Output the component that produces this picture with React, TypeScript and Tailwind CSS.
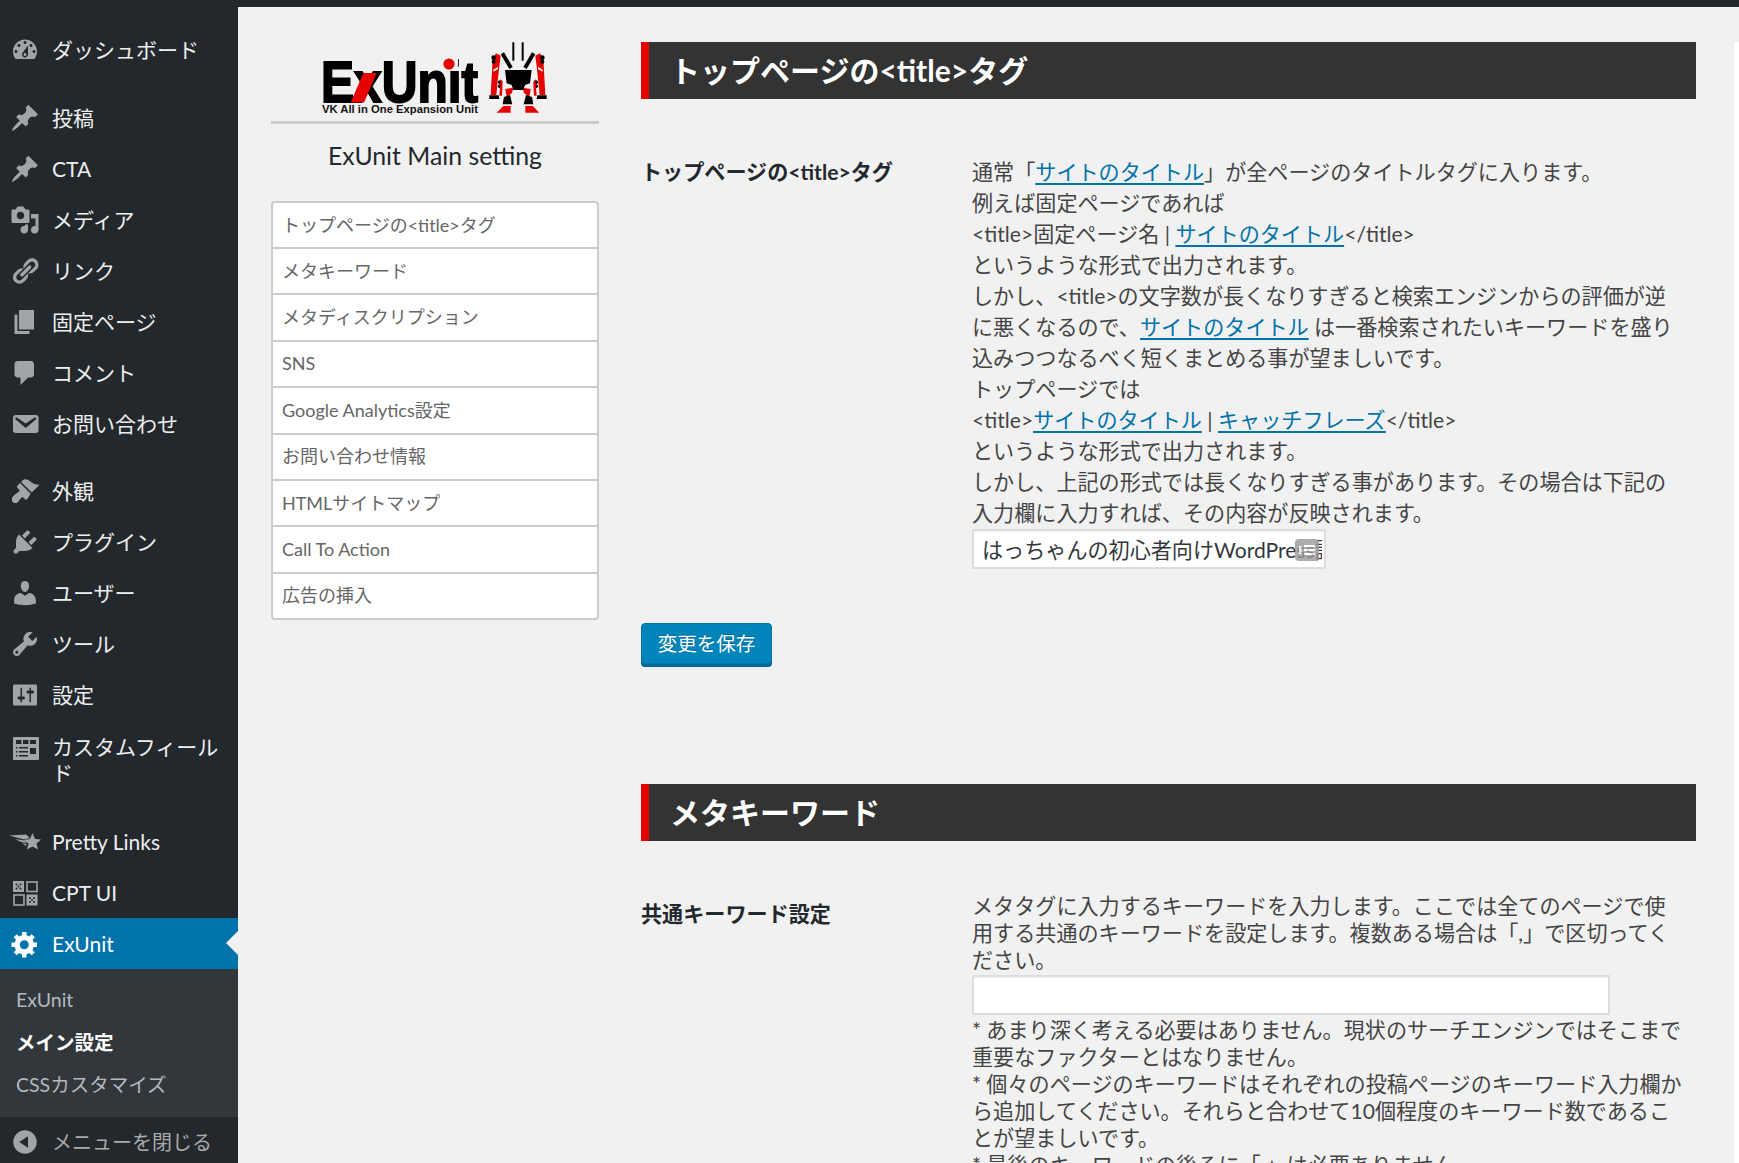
const icons: Record<string, string> = {
  dashboard:
    "M3.76 16h12.48c1.1-1.37 1.76-3.11 1.76-5 0-4.42-3.58-8-8-8s-8 3.58-8 8c0 1.89.66 3.63 1.76 5zM10 4c.55 0 1 .45 1 1s-.45 1-1 1-1-.45-1-1 .45-1 1-1zM6 6c.55 0 1 .45 1 1s-.45 1-1 1-1-.45-1-1 .45-1 1-1zm8 0c.55 0 1 .45 1 1s-.45 1-1 1-1-.45-1-1 .45-1 1-1zm-5.37 5.55L12 7v6c0 1.1-.9 2-2 2s-2-.9-2-2c0-.57.24-1.08.63-1.45zM4 10c.55 0 1 .45 1 1s-.45 1-1 1-1-.45-1-1 .45-1 1-1zm12 0c.55 0 1 .45 1 1s-.45 1-1 1-1-.45-1-1 .45-1 1-1zm-5 3c0-.55-.45-1-1-1s-1 .45-1 1 .45 1 1 1 1-.45 1-1z",
  pin: "M10.44 3.02l1.82-1.82 6.36 6.35-1.83 1.82c-1.05-.68-2.48-.57-3.41.36l-.75.75c-.92.93-1.04 2.35-.35 3.41l-1.83 1.82-2.41-2.41-2.8 2.79c-.42.42-3.38 2.71-3.8 2.29s1.86-3.39 2.28-3.81l2.79-2.79L4.1 9.36l1.83-1.82c1.05.69 2.48.57 3.4-.36l.75-.75c.93-.92 1.05-2.35.36-3.41z",
  media:
    "M13 11V4c0-.55-.45-1-1-1h-1.67L9 1H5L3.67 3H2c-.55 0-1 .45-1 1v7c0 .55.45 1 1 1h10c.55 0 1-.45 1-1zM7 4.5c1.38 0 2.5 1.12 2.5 2.5S8.38 9.5 7 9.5 4.5 8.38 4.5 7 5.62 4.5 7 4.5zM14 6h5v10.5c0 1.38-1.12 2.5-2.5 2.5S14 17.88 14 16.5s1.12-2.5 2.5-2.5c.17 0 .34.02.5.05V9h-3V6zm-4 8.05V13h2v3.5c0 1.38-1.12 2.5-2.5 2.5S7 17.88 7 16.5 8.12 14 9.5 14c.17 0 .34.02.5.05z",
  links:
    "M17.74 2.76c1.68 1.69 1.68 4.41 0 6.1l-1.53 1.52c-1.12 1.12-2.7 1.47-4.14 1.09l2.62-2.61.76-.77.76-.76c.84-.84.84-2.2 0-3.04-.84-.85-2.2-.85-3.04 0l-.77.76-3.38 3.38c-.37-1.44-.02-3.02 1.1-4.14l1.52-1.53c1.69-1.68 4.42-1.68 6.1 0zM8.59 13.43l5.34-5.34c.42-.42.42-1.1 0-1.52-.44-.43-1.13-.39-1.53 0l-5.33 5.34c-.42.42-.42 1.1 0 1.52.44.43 1.13.39 1.52 0zm-.76 2.29l4.14-4.15c.38 1.44.03 3.02-1.09 4.14l-1.52 1.53c-1.69 1.68-4.41 1.68-6.1 0-1.68-1.68-1.68-4.42 0-6.1l1.53-1.52c1.12-1.12 2.7-1.47 4.14-1.1l-4.14 4.15c-.85.84-.85 2.2 0 3.05.84.84 2.2.84 3.04 0z",
  page: "M6 15V2h10v13H6zm-1 1h8v2H3V5h2v11z",
  comment:
    "M5 2h9c1.1 0 2 .9 2 2v7c0 1.1-.9 2-2 2h-2l-5 5v-5H5c-1.1 0-2-.9-2-2V4c0-1.1.9-2 2-2z",
  email:
    "M3.87 4h13.25C18.37 4 19 4.59 19 5.79v8.42c0 1.19-.63 1.79-1.88 1.79H3.87c-1.25 0-1.88-.6-1.88-1.79V5.79c0-1.2.63-1.79 1.88-1.79zm6.62 8.6l6.74-5.53c.24-.2.43-.66.13-1.07-.29-.41-.82-.42-1.17-.17l-5.7 3.86L4.8 5.83c-.35-.25-.88-.24-1.17.17-.3.41-.11.87.13 1.07z",
  appearance:
    "M14.48 11.06L7.41 3.99l1.5-1.5c.5-.56 2.3-.47 3.51.32 1.21.8 1.43 1.28 2.91 2.1 1.18.64 2.45 1.26 4.45.85zm-.71.71L6.7 4.7 4.93 6.47c-.39.39-.39 1.02 0 1.41l1.06 1.06c.39.39.39 1.03 0 1.42-.6.6-1.43 1.11-2.21 1.69-.35.26-.7.53-1.01.84C1.43 13.71.96 15.35 1.4 16.6c.45 1.25 2.04 1.88 3.61 1.1.31-.3.58-.66.84-1.01.58-.78 1.1-1.61 1.69-2.21.39-.39 1.03-.39 1.42 0l1.05 1.06c.39.39 1.02.39 1.41 0z",
  plugin:
    "M13.11 4.36L9.87 7.6 8 5.73l3.24-3.24c.35-.34 1.05-.2 1.56.32.52.51.66 1.21.31 1.55zm-8 1.77l.91-1.12 9.01 9.01-1.19.84c-.71.71-2.63 1.16-3.82 1.16H6.14L4.9 17.26c-.59.59-1.54.59-2.12 0-.59-.58-.59-1.53 0-2.12l1.24-1.24v-3.88c0-1.13.4-3.19 1.09-3.89zm7.26 3.97l3.24-3.24c.34-.35 1.04-.21 1.55.31.52.51.66 1.21.31 1.55l-3.24 3.25z",
  users:
    "M10 9.25c-2.27 0-2.73-3.44-2.73-3.44C7 4.02 7.82 2 9.97 2c2.16 0 2.98 2.02 2.71 3.81 0 0-.41 3.44-2.68 3.44zm0 2.57L12.72 10c2.39 0 4.52 2.33 4.52 4.53v2.49s-3.65 1.13-7.24 1.13c-3.65 0-7.24-1.13-7.24-1.13v-2.49c0-2.25 1.94-4.48 4.47-4.48z",
  tools:
    "M16.68 9.77c-1.34 1.34-3.3 1.67-4.95.99l-5.41 6.52c-.99.99-2.59.99-3.58 0s-.99-2.59 0-3.57l6.52-5.42c-.68-1.65-.35-3.61.99-4.95 1.28-1.28 3.12-1.62 4.72-1.06l-2.89 2.89 2.82 2.82 2.86-2.87c.53 1.58.18 3.39-1.08 4.65zM3.81 16.21c.4.39 1.04.39 1.43 0 .4-.4.4-1.04 0-1.43-.39-.4-1.03-.4-1.43 0-.39.39-.39 1.03 0 1.43z",
  settings:
    "M18 16V4c0-.55-.45-1-1-1H3c-.55 0-1 .45-1 1v12c0 .55.45 1 1 1h14c.55 0 1-.45 1-1zM8 11h1c.55 0 1 .45 1 1s-.45 1-1 1H8v1.5c0 .28-.22.5-.5.5s-.5-.22-.5-.5V13H6c-.55 0-1-.45-1-1s.45-1 1-1h1V5.5c0-.28.22-.5.5-.5s.5.22.5.5V11zm5-2h-1c-.55 0-1-.45-1-1s.45-1 1-1h1V5.5c0-.28.22-.5.5-.5s.5.22.5.5V7h1c.55 0 1 .45 1 1s-.45 1-1 1h-1v5.5c0 .28-.22.5-.5.5s-.5-.22-.5-.5V9z",
  gear: "M18 12h-2.18c-.17.7-.44 1.35-.81 1.93l1.54 1.54-2.1 2.1-1.54-1.54c-.58.36-1.23.63-1.91.79V19H8v-2.18c-.68-.16-1.33-.43-1.91-.79l-1.54 1.54-2.12-2.12 1.54-1.54c-.36-.58-.63-1.23-.79-1.91H1V9.03h2.17c.16-.7.44-1.35.8-1.94L2.43 5.55l2.1-2.1 1.54 1.54c.58-.37 1.24-.64 1.93-.81V2h3v2.18c.68.16 1.33.43 1.91.79l1.54-1.54 2.12 2.12-1.54 1.54c.36.59.64 1.24.8 1.94H18V12zm-8.5 1.5c1.66 0 3-1.34 3-3s-1.34-3-3-3-3 1.34-3 3 1.34 3 3 3z",
  collapse:
    "M10 2.16c4.33 0 7.84 3.51 7.84 7.84s-3.51 7.84-7.84 7.84S2.16 14.33 2.16 10 5.71 2.16 10 2.16zm2 11.72V6.12L6.18 9.97z",
};

const Icon = ({ name, white }: { name: string; white?: boolean }) => (
  <svg
    viewBox="0 0 20 20"
    className={`w-[30px] h-[30px] shrink-0 ${white ? "text-white" : "text-[#a0a5aa]"}`}
  >
    <path d={icons[name]} fill="currentColor" fillRule="evenodd" />
  </svg>
);

const FieldsIcon = () => (
  <svg viewBox="0 0 30 30" className="w-[30px] h-[30px] shrink-0">
    <rect x="3" y="3" width="26" height="23" rx="1" fill="#a0a5aa" />
    <g fill="#23282d">
      <rect x="6" y="6" width="5.5" height="4" />
      <rect x="13" y="6" width="5.5" height="4" />
      <rect x="20" y="6" width="6" height="4" />
      <rect x="6" y="13" width="1.5" height="1.5" />
      <rect x="9" y="13" width="9" height="1.5" />
      <rect x="6" y="17" width="1.5" height="1.5" />
      <rect x="9" y="17" width="9" height="1.5" />
      <rect x="6" y="21" width="1.5" height="1.5" />
      <rect x="9" y="21" width="9" height="1.5" />
      <rect x="20" y="14" width="6" height="6" />
    </g>
  </svg>
);

const PrettyIcon = () => (
  <svg viewBox="0 0 32 30" className="w-[32px] h-[30px] shrink-0 -ml-[1px] -mr-[1px]">
    <g fill="#a0a5aa">
      <polygon points="23.5,6 26,12 32,12.5 27.5,16.5 29,22.5 23.5,19.5 18,22.5 19.5,16.5 15,13 21,12" />
      <path d="M0 8.5 L17 7.5 L21 11 L15 12.5 Z" />
      <path d="M6 12 L15.5 13.5 L18 16 L12 15 Z" />
      <path d="M13 16 L17.5 17 L17 19 Z" />
    </g>
  </svg>
);

const CptIcon = () => (
  <svg viewBox="0 0 30 30" className="w-[30px] h-[30px] shrink-0">
    <rect x="3" y="3" width="11" height="11" fill="#a0a5aa" />
    <rect x="17" y="4" width="10" height="9.5" fill="none" stroke="#a0a5aa" strokeWidth="1.6" />
    <rect x="4" y="17" width="10" height="10" fill="none" stroke="#a0a5aa" strokeWidth="1.6" />
    <rect x="16.5" y="16.5" width="11" height="11" fill="#a0a5aa" />
    <g fill="#23282d">
      <circle cx="6.5" cy="6.5" r="1" />
      <circle cx="10.5" cy="6.5" r="1" />
      <circle cx="8.5" cy="8.5" r="1" />
      <circle cx="6.5" cy="10.5" r="1" />
      <circle cx="10.5" cy="10.5" r="1" />
      <circle cx="20" cy="20" r="1" />
      <circle cx="24" cy="20" r="1" />
      <circle cx="22" cy="22" r="1" />
      <circle cx="20" cy="24" r="1" />
      <circle cx="24" cy="24" r="1" />
    </g>
  </svg>
);

const Row = ({ icon, label }: { icon: React.ReactNode; label: string }) => (
  <div className="flex items-center h-[51px] pl-[10px] gap-[12px] text-[#eeeeee]">
    {icon}
    <span>{label}</span>
  </div>
);

const Sidebar = () => (
  <aside className="w-[238px] shrink-0 bg-[#23282d] text-[21px] leading-[26px]">
    <div className="pt-[17px] pb-[17px]">
      <Row icon={<Icon name="dashboard" />} label="ダッシュボード" />
    </div>
    <Row icon={<Icon name="pin" />} label="投稿" />
    <Row icon={<Icon name="pin" />} label="CTA" />
    <Row icon={<Icon name="media" />} label="メディア" />
    <Row icon={<Icon name="links" />} label="リンク" />
    <Row icon={<Icon name="page" />} label="固定ページ" />
    <Row icon={<Icon name="comment" />} label="コメント" />
    <Row icon={<Icon name="email" />} label="お問い合わせ" />
    <div className="h-[16px]" />
    <Row icon={<Icon name="appearance" />} label="外観" />
    <Row icon={<Icon name="plugin" />} label="プラグイン" />
    <Row icon={<Icon name="users" />} label="ユーザー" />
    <Row icon={<Icon name="tools" />} label="ツール" />
    <Row icon={<Icon name="settings" />} label="設定" />
    <div className="flex pl-[10px] gap-[12px] pt-[14px] pb-[12px] text-[#eeeeee]">
      <FieldsIcon />
      <span className="w-[170px]">カスタムフィールド</span>
    </div>
    <div className="h-[18px]" />
    <Row icon={<PrettyIcon />} label="Pretty Links" />
    <Row icon={<CptIcon />} label="CPT UI" />
    <div className="relative flex items-center h-[51px] pl-[10px] gap-[12px] bg-[#0073aa] text-white">
      <Icon name="gear" white />
      <span>ExUnit</span>
      <span className="absolute right-0 top-[13px] border-y-[12px] border-y-transparent border-r-[12px] border-r-[#f1f1f1]" />
    </div>
    <div className="bg-[#32373c] pt-[10px] h-[148px] text-[19.5px] leading-[42.5px] pl-[16px] text-[#b4b9be]">
      <div>ExUnit</div>
      <div className="font-bold text-white">メイン設定</div>
      <div>CSSカスタマイズ</div>
    </div>
    <div className="flex items-center h-[50px] pl-[10px] gap-[12px] text-[#aaaaaa] text-[20px]">
      <Icon name="collapse" />
      <span>メニューを閉じる</span>
    </div>
  </aside>
);

const RobotHalf = () => (
  <>
    <polygon points="62,58 72,52 98,96 88,102" />
    <polygon points="38,72 48,55 62,62 56,110 49,180 32,180" fill="#e60000" />
    <circle cx="41" cy="68" r="7" />
    <circle cx="41" cy="80" r="6" />
    <polygon points="40,104 54,96 54,102 40,110" fill="#fff" />
    <circle cx="60" cy="142" r="6" />
    <circle cx="60" cy="154" r="6" />
    <polygon points="28,181 56,181 58,192 28,192" />
    <polygon points="62,132 68,140 66,182 58,182" fill="#e60000" />
    <polygon points="76,162 100,158 96,174 80,186" fill="#e60000" />
    <polygon points="72,186 90,180 97,208 68,208" />
    <polygon points="50,233 70,213 92,213 92,233" fill="#e60000" />
  </>
);

const Logo = () => (
  <svg viewBox="0 0 230 85" className="w-[230px] h-[85px] ml-[49px] block">
    <text
      x="1"
      y="67"
      textLength="157"
      lengthAdjust="spacingAndGlyphs"
      fontFamily="'Liberation Sans', sans-serif"
      fontWeight="700"
      fontSize="58"
      stroke="#000"
      strokeWidth="2"
    >
      ExUnit
    </text>
    <polygon points="30.7,67.5 44,67.5 56.7,38 43.3,38" fill="#e60000" />
    <rect x="120" y="20" width="18" height="15" fill="#f1f1f1" />
    <circle cx="129" cy="29" r="5.6" fill="#e60000" />
    <text
      x="2"
      y="78"
      textLength="156"
      lengthAdjust="spacingAndGlyphs"
      fontFamily="'Liberation Sans', sans-serif"
      fontWeight="700"
      fontSize="10.5"
      fill="#111"
    >
      VK All in One Expansion Unit
    </text>
    <g transform="translate(160 0) scale(0.3333)">
      <rect x="97" y="22" width="6" height="55" />
      <rect x="125" y="22" width="6" height="55" />
      <RobotHalf />
      <g transform="translate(228 0) scale(-1 1)">
        <RobotHalf />
      </g>
      <polygon points="75,105 155,105 150,145 135,150 130,165 100,165 95,150 80,145" />
    </g>
  </svg>
);

const navItems = [
  "トップページの<title>タグ",
  "メタキーワード",
  "メタディスクリプション",
  "SNS",
  "Google Analytics設定",
  "お問い合わせ情報",
  "HTMLサイトマップ",
  "Call To Action",
  "広告の挿入",
];

const SideNav = () => (
  <nav className="w-[328px] shrink-0 ml-[33px] pt-[28px]">
    <Logo />
    <div className="h-[3px] mt-[1px] bg-[#cccccc]" />
    <h2 className="mt-[15px] text-center text-[24.8px] leading-[34px] text-[#23282d]">
      ExUnit Main setting
    </h2>
    <ul className="mt-[28px] bg-white border-2 border-[#cccccc] rounded-[4px] text-[18px] text-[#666666]">
      {navItems.map((item, i) => (
        <li
          key={item}
          className={`flex items-center pl-[9px] ${i > 0 ? "border-t-2 border-[#cccccc] h-[46.4px]" : "h-[44px]"}`}
        >
          {item}
        </li>
      ))}
    </ul>
  </nav>
);

const A = ({ children }: { children: React.ReactNode }) => (
  <a className="text-[#0073aa] underline decoration-2 underline-offset-[3px]">{children}</a>
);

const Heading = ({ children }: { children: React.ReactNode }) => (
  <h2 className="h-[57px] flex items-center bg-[#333333] border-l-[8px] border-[#e60000] pl-[21px] text-white font-bold text-[30px]">
    {children}
  </h2>
);

const Main = () => (
  <main className="w-[1055px] shrink-0 ml-[42px] pt-[35px]">
    <Heading>トップページの&lt;title&gt;タグ</Heading>
    <div className="mt-[57px] flex text-[21.1px] leading-[31px] text-[#444444]">
      <div className="w-[331px] shrink-0 font-bold text-[#23282d]">トップページの&lt;title&gt;タグ</div>
      <div className="whitespace-nowrap">
        通常「<A>サイトのタイトル</A>」が全ページのタイトルタグに入ります。
        <br />
        例えば固定ページであれば
        <br />
        &lt;title&gt;固定ページ名 | <A>サイトのタイトル</A>&lt;/title&gt;
        <br />
        というような形式で出力されます。
        <br />
        しかし、&lt;title&gt;の文字数が長くなりすぎると検索エンジンからの評価が逆
        <br />
        に悪くなるので、<A>サイトのタイトル</A> は一番検索されたいキーワードを盛り
        <br />
        込みつつなるべく短くまとめる事が望ましいです。
        <br />
        トップページでは
        <br />
        &lt;title&gt;<A>サイトのタイトル</A> | <A>キャッチフレーズ</A>&lt;/title&gt;
        <br />
        というような形式で出力されます。
        <br />
        しかし、上記の形式では長くなりすぎる事があります。その場合は下記の
        <br />
        入力欄に入力すれば、その内容が反映されます。
        <div className="relative w-[354px] h-[40px] mt-[1px]">
          <input
            readOnly
            value="はっちゃんの初心者向けWordPress講座"
            className="w-full h-full bg-white border-2 border-[#dddddd] pl-[8px] pr-[2px] text-[21.1px] text-[#32373c] outline-none shadow-[inset_0_1px_2px_rgba(0,0,0,0.07)]"
          />
          <svg viewBox="0 0 24 22" className="absolute left-[323px] top-[10px] w-[24px] h-[22px] opacity-80">
            <rect width="24" height="22" rx="4" fill="#999999" />
            <rect x="4" y="7" width="2.5" height="8" fill="#fff" />
            <rect x="9" y="6" width="11" height="2" fill="#fff" />
            <rect x="9" y="10" width="11" height="2" fill="#fff" />
            <rect x="9" y="14" width="11" height="2" fill="#fff" />
          </svg>
        </div>
      </div>
    </div>
    <button className="block mt-[54px] w-[131px] h-[41px] bg-[#0085ba] border border-[#0073aa] rounded-[4px] shadow-[0_3px_0_#006799] text-white text-[19.5px] [text-shadow:0_-1px_1px_#006799]">
      変更を保存
    </button>
    <div className="mt-[120px]">
      <Heading>メタキーワード</Heading>
    </div>
    <div className="mt-[51px] flex text-[21.1px] leading-[27px] text-[#444444]">
      <div className="w-[331px] shrink-0 pt-[8px] font-bold text-[#23282d]">共通キーワード設定</div>
      <div className="whitespace-nowrap">
        メタタグに入力するキーワードを入力します。ここでは全てのページで使
        <br />
        用する共通のキーワードを設定します。複数ある場合は「,」で区切ってく
        <br />
        ださい。
        <input
          readOnly
          className="block w-[638px] h-[40px] mt-[2px] mb-[1px] bg-white border-2 border-[#dddddd] outline-none shadow-[inset_0_1px_2px_rgba(0,0,0,0.07)]"
        />
        * あまり深く考える必要はありません。現状のサーチエンジンではそこまで
        <br />
        重要なファクターとはなりません。
        <br />
        * 個々のページのキーワードはそれぞれの投稿ページのキーワード入力欄か
        <br />
        ら追加してください。それらと合わせて10個程度のキーワード数であるこ
        <br />
        とが望ましいです。
        <br />* 最後のキーワードの後ろに「,」は必要ありません。
      </div>
    </div>
  </main>
);

export default function App() {
  return (
    <div className="w-[1739px] h-[1163px] overflow-hidden bg-[#f1f1f1] flex flex-col font-['Lato','Noto_Sans_CJK_JP',sans-serif]">
      <div className="h-[7px] shrink-0 bg-[#23282d]" />
      <div className="flex flex-1 min-h-0">
        <Sidebar />
        <SideNav />
        <Main />
        <div className="w-[5px] shrink-0 ml-[38px] mt-[35px] bg-white" />
      </div>
    </div>
  );
}
